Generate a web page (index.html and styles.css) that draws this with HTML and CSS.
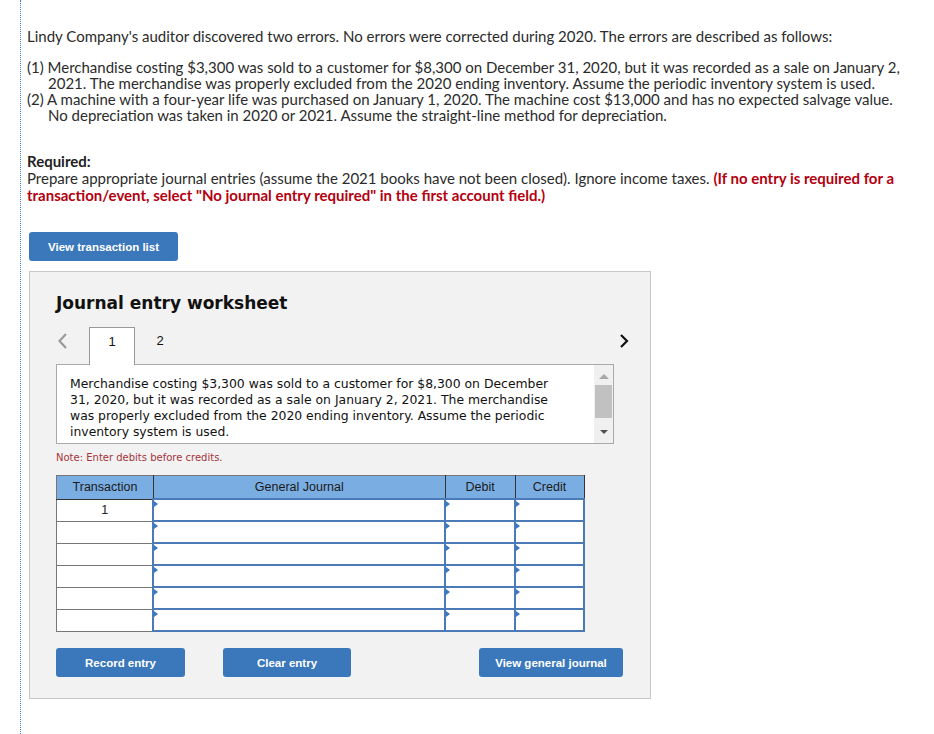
FILE: index.html
```html
<!DOCTYPE html>
<html lang="en">
<head>
    <meta charset="UTF-8">
    <title>Journal entry worksheet</title>
    <link rel="stylesheet" href="styles.css">
</head>
<body>
    <div class="page">
        <p class="intro">Lindy Company's auditor discovered two errors. No errors were corrected during 2020. The errors are described as follows:</p>
        <div class="errors">
            <p>(1) Merchandise costing $3,300 was sold to a customer for $8,300 on December 31, 2020, but it was recorded as a sale on January 2, 2021. The merchandise was properly excluded from the 2020 ending inventory. Assume the periodic inventory system is used.</p>
            <p>(2) A machine with a four-year life was purchased on January 1, 2020. The machine cost $13,000 and has no expected salvage value. No depreciation was taken in 2020 or 2021. Assume the straight-line method for depreciation.</p>
        </div>

        <div class="required">
            <p class="req-title">Required:</p>
            <p>Prepare appropriate journal entries (assume the 2021 books have not been closed). Ignore income taxes. <span class="warn">(If no entry is required for a transaction/event, select "No journal entry required" in the first account field.)</span></p>
        </div>

        <button class="btn btn-list">View transaction list</button>

        <div class="worksheet">
            <h2>Journal entry worksheet</h2>
            <div class="tabs">
                <span class="arrow prev">
                    <svg width="12" height="16" viewBox="0 0 12 16"><path d="M9 1 L2.5 8 L9 15" fill="none" stroke="#9a9a9a" stroke-width="2.2"/></svg>
                </span>
                <span class="tab active">1</span>
                <span class="tab">2</span>
                <span class="arrow next">
                    <svg width="12" height="16" viewBox="0 0 12 16"><path d="M3 2 L9 8 L3 14" fill="none" stroke="#111" stroke-width="2.2"/></svg>
                </span>
            </div>
            <div class="desc">
                <p>Merchandise costing $3,300 was sold to a customer for $8,300 on December 31, 2020, but it was recorded as a sale on January 2, 2021. The merchandise was properly excluded from the 2020 ending inventory. Assume the periodic inventory system is used.</p>
                <div class="scrollbar">
                    <span class="up"></span>
                    <span class="thumb"></span>
                    <span class="down"></span>
                </div>
            </div>
            <p class="note">Note: Enter debits before credits.</p>

            <table class="journal">
                <thead>
                    <tr>
                        <th class="col-tr">Transaction</th>
                        <th class="col-gj">General Journal</th>
                        <th class="col-dr">Debit</th>
                        <th class="col-cr">Credit</th>
                    </tr>
                </thead>
                <tbody id="journalBody"></tbody>
            </table>

            <div class="actions">
                <button class="btn btn-record">Record entry</button>
                <button class="btn btn-clear">Clear entry</button>
                <button class="btn btn-view">View general journal</button>
            </div>
        </div>
    </div>

    <script>
        let body = document.getElementById("journalBody");
        for (let i = 0; i < 6; i++) {
            let row = body.insertRow();
            row.insertCell(0).innerText = i === 0 ? "1" : "";
            for (let c = 1; c < 4; c++) {
                row.insertCell(c).className = "entry";
            }
        }
    </script>
</body>
</html>
```

FILE: styles.css
```css
body {
    margin: 0;
    background: white;
    font-family: Lato, "Open Sans", sans-serif;
    color: #2b2b2b;
}
.page {
    margin-left: 20px;
    border-left: 1px dotted #3a7bd5;
    min-height: 734px;
    padding: 28px 24px 0 6px;
    box-sizing: border-box;
}
p { margin: 0; }
.intro {
    font-size: 15px;
    line-height: 16px;
}
.errors {
    margin-top: 15px;
    font-size: 15px;
    line-height: 16px;
}
.errors p {
    padding-left: 21px;
    text-indent: -21px;
}
.required {
    margin-top: 30px;
    font-size: 15px;
    line-height: 17px;
}
.req-title {
    font-weight: bold;
    color: #222;
}
.warn {
    color: #b3000f;
    font-weight: bold;
}
.btn {
    background: #3b78bb;
    color: white;
    border: none;
    border-radius: 3px;
    font-family: "Liberation Sans", Arial, sans-serif;
    font-weight: bold;
    font-size: 11.5px;
    height: 29px;
    cursor: pointer;
}
.btn-list {
    display: block;
    margin: 28px 0 0 2px;
    width: 149px;
}
.worksheet {
    margin: 10px 0 0 2px;
    width: 622px;
    height: 428px;
    box-sizing: border-box;
    background: #f2f2f2;
    border: 1px solid #c8c8c8;
    padding: 0 26px;
    font-family: "DejaVu Sans", Verdana, sans-serif;
}
.worksheet h2 {
    margin: 20px 0 0 0;
    font-size: 17px;
    line-height: 22px;
    color: #111;
}
.tabs {
    display: flex;
    align-items: flex-end;
    height: 37px;
    margin-top: 13px;
}
.tab {
    width: 46px;
    height: 37px;
    line-height: 28px;
    text-align: center;
    font-family: "Liberation Sans", Arial, sans-serif;
    font-size: 13px;
    color: #111;
    box-sizing: border-box;
}
.tab + .tab { width: 50px; }
.tab.active {
    background: white;
    border: 1px solid #999;
    border-bottom: none;
    margin-bottom: -1px;
    height: 38px;
}
.arrow {
    align-self: flex-start;
    margin-top: 6px;
    height: 16px;
}
.prev {
    width: 33px;
    padding-left: 1px;
    box-sizing: border-box;
}
.next {
    margin-left: auto;
    margin-right: -6px;
}
.desc {
    width: 558px;
    height: 80px;
    box-sizing: border-box;
    background: white;
    border: 1px solid #aaa;
    display: flex;
    font-size: 12.4px;
    line-height: 16px;
    color: #111;
}
.desc p {
    flex: 1;
    padding: 11px 42px 0 13px;
}
.scrollbar {
    width: 19px;
    background: #f0f0f0;
    display: flex;
    flex-direction: column;
    align-items: center;
}
.scrollbar .up {
    margin-top: 9px;
    border-left: 5px solid transparent;
    border-right: 5px solid transparent;
    border-bottom: 5px solid #a8a8a8;
}
.scrollbar .thumb {
    margin-top: 6px;
    width: 17px;
    height: 33px;
    background: #c1c1c1;
}
.scrollbar .down {
    margin-top: 12px;
    border-left: 4px solid transparent;
    border-right: 4px solid transparent;
    border-top: 4px solid #505050;
}
.note {
    margin-top: 8px;
    font-size: 10px;
    color: #a6343a;
    line-height: 12px;
}
.journal {
    margin-top: 11px;
    width: 529px;
    border-collapse: collapse;
    font-family: "Liberation Sans", Arial, sans-serif;
    font-size: 12.5px;
}
.journal th {
    background: #7aaee3;
    border: 1px solid #333;
    border-top-color: #777;
    border-left-color: #777;
    height: 22px;
    padding: 0;
    font-weight: normal;
    color: #1a1a1a;
}
.col-tr { width: 96px; }
.col-gj { width: 291px; }
.col-dr { width: 69px; }
.col-cr { width: 68px; }
.journal td {
    height: 20px;
    padding: 0;
    background: white;
    border: 1px solid #777;
    text-align: center;
    color: #222;
}
.journal td.entry {
    border: 2px solid #4a7ab8;
    position: relative;
}
.journal td.entry::before {
    content: "";
    position: absolute;
    left: 0;
    top: 1px;
    border-top: 3px solid transparent;
    border-bottom: 3px solid transparent;
    border-left: 4px solid #3a78c4;
}
.actions {
    display: flex;
    margin-top: 16px;
}
.btn-record { width: 129px; }
.btn-clear { width: 128px; margin-left: 38px; }
.btn-view { width: 144px; margin-left: auto; margin-right: 1px; }
```
